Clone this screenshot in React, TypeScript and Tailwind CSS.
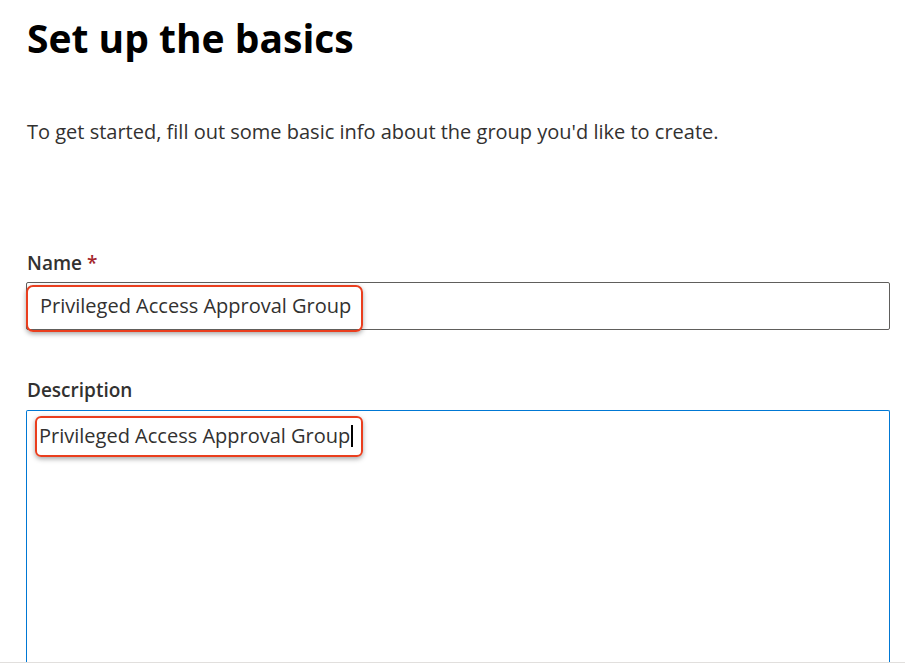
import React from 'react';

const font = { fontFamily: '"Open Sans", "Noto Sans", sans-serif' };

export default function App() {
  const value = 'Privileged Access Approval Group';

  return (
    <div className="h-[667px] w-[905px] overflow-hidden bg-white text-[#323130]" style={font}>
      <div className="flex h-[663px] flex-col border-b border-[#e1dfdd] pl-[26px] pr-[15px]">
        {/* Header */}
        <h1 className="mt-[14px] pl-px text-[39px] font-bold leading-[48px] text-black">
          Set up the basics
        </h1>
        <p className="mt-[57px] pl-px text-[20px] leading-[26px] text-[#323130]">
          To get started, fill out some basic info about the group you'd like to create.
        </p>

        {/* Name */}
        <label className="mt-[106px] pl-px text-[19px] font-semibold leading-[24px]">
          Name <span className="text-[#a4262c]">*</span>
        </label>
        <div className="relative mt-[7px] flex h-[48px] items-center rounded-[2px] border border-[#605e5c] pl-[13px]">
          <span className="text-[20px] leading-[26px] text-[#323130]">{value}</span>
          <div className="pointer-events-none absolute -left-px top-[2px] h-[47px] w-[337px] rounded-[7px] border-2 border-[#ea3e1e] shadow-[0_2px_5px_rgba(0,0,0,0.35)]" />
        </div>

        {/* Description */}
        <label className="mt-[48px] pl-px text-[19px] font-semibold leading-[24px]">
          Description
        </label>
        <div className="relative mt-[8px] flex-1 rounded-t-[2px] border border-b-0 border-[#0078d4] pl-[12px] pt-[10px]">
          <span className="text-[20px] leading-[26px] text-[#323130]">{value}</span>
          <span className="ml-px inline-block h-[22px] w-[2px] translate-y-[4px] bg-black" />
          <div className="pointer-events-none absolute left-[8px] top-[5px] h-[41px] w-[328px] rounded-[6px] border-2 border-[#ea3e1e] shadow-[0_2px_5px_rgba(0,0,0,0.35)]" />
        </div>
      </div>
    </div>
  );
}
